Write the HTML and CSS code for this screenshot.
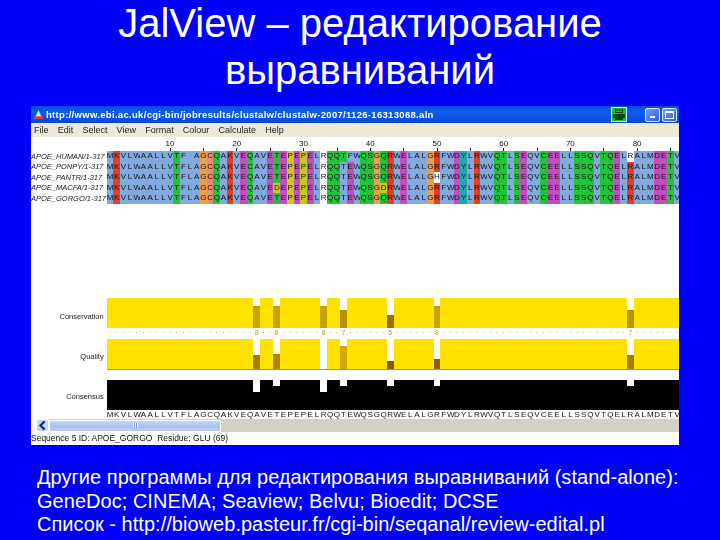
FILE: index.html
```html
<!DOCTYPE html>
<html lang="ru">
<head>
<meta charset="utf-8">
<title>JalView</title>
<link rel="stylesheet" href="styles.css">
</head>
<body>
<h1 class="title">JalView – редактирование<br>выравниваний</h1>
<section class="window">
  <header class="titlebar">
    <svg class="appicon" viewBox="0 0 12 12"><path d="M2 10 L6 1 L10 10 Z" fill="#e8e8f0"/><path d="M1 8h10v3H1z" fill="#d04040"/></svg>
    <span class="url">http://www.ebi.ac.uk/cgi-bin/jobresults/clustalw/clustalw-2007/1126-16313068.aln</span>
    <svg class="printer" viewBox="0 0 16 15"><rect width="16" height="15" fill="#12c02c"/><rect x=".5" y=".5" width="15" height="14" fill="none" stroke="#c8e8f8"/><path d="M4 2h8v4H4zM2 7h12v4H2zM4 11h8v2H4z" fill="#064010"/><path d="M5 3h6M5 4.5h6" stroke="#12c02c"/></svg>
    <span class="winbtn"><span class="minglyph"></span></span>
    <span class="winbtn"><span class="maxglyph"></span></span>
  </header>
  <nav class="menu"><span>File</span><span>Edit</span><span>Select</span><span>View</span><span>Format</span><span>Colour</span><span>Calculate</span><span>Help</span></nav>
  <div class="panel">
    <div class="labels">
      <div class="names">
        <div>APOE_HUMAN/1-317</div>
        <div>APOE_PONPY/1-317</div>
        <div>APOE_PANTR/1-317</div>
        <div>APOE_MACFA/1-317</div>
        <div>APOE_GORGO/1-317</div>
      </div>
      <div class="annlabels">
        <div class="annlabel">Conservation</div>
        <div class="annlabel quality">Quality</div>
        <div class="annlabel consensus">Consensus</div>
      </div>
    </div>
    <div class="tracks">
      <div class="ruler" id="ruler"></div>
      <div id="rows" class="rows"></div>
      <div class="bars cons" id="cons"></div>
      <div class="cells nums" id="nums"></div>
      <div class="bars qual" id="qual"></div>
      <div class="bars black" id="blackbars"></div>
      <div class="cells consseq" id="consseq"></div>
    </div>
  </div>
  <div class="scroll">
    <span class="arrow"><svg viewBox="0 0 8 8"><path d="M5.5 1 L2.5 4 L5.5 7" fill="none" stroke="#1a2a70" stroke-width="1.6"/></svg></span>
    <span class="thumb"><span class="grip"></span></span>
  </div>
  <div class="status">Sequence 5 ID: APOE_GORGO  Residue: GLU (69)</div>
</section>
<div class="notes">
  <p>Другие программы для редактирования выравниваний (stand-alone):</p>
  <p>GeneDoc; CINEMA; Seaview; Belvu; Bioedit; DCSE</p>
  <p>Список - http://bioweb.pasteur.fr/cgi-bin/seqanal/review-edital.pl</p>
</div>
<script src="app.js"></script>
</body>
</html>
```
FILE: styles.css
```css
* { box-sizing: border-box; }
html, body { margin: 0; height: 540px; overflow: hidden; }
body { background: #0000f8; font-family: "Liberation Sans", Arial, sans-serif; color: #fff; }
.title { margin: 0; height: 106px; font-size: 40px; font-weight: 400; line-height: 47px; text-align: center; }
.window { width: 648px; height: 339px; margin-left: 31px; background: #fff; color: #111; display: flex; flex-direction: column; overflow: hidden; filter: blur(.35px); }
.titlebar { height: 17px; background: linear-gradient(#0a4ad8, #0c5cf0 30%, #0850e0 80%, #0a44c8); display: flex; align-items: center; padding-left: 2px; padding-right: 2px; color: #fff; }
.appicon { width: 11px; height: 11px; margin-right: 2px; }
.url { font-size: 9.5px; font-weight: 700; letter-spacing: .31px; white-space: nowrap; flex: 1; }
.printer { width: 16px; height: 15px; margin-right: 16px; }
.winbtn { width: 15px; height: 14px; margin-left: 2px; border-radius: 2px; background: linear-gradient(135deg, #6f9cf0, #2f62d8); border: 1px solid #dce8fc; display: flex; align-items: center; justify-content: center; }
.minglyph { width: 5px; height: 2px; background: #fff; margin-top: 5px; }
.maxglyph { width: 9px; height: 8px; border: 1px solid #fff; border-top-width: 2px; }
.menu { height: 14px; background: #ece9d8; display: flex; gap: 9.2px; padding-left: 3px; align-items: center; font-size: 9px; color: #222; }
.panel { height: 282px; display: flex; }
.labels { width: 75.7px; font-size: 7.5px; color: #222; flex: none; }
.names { padding-top: 14.5px; font-style: italic; }
.names div { height: 10.5px; line-height: 10.5px; white-space: nowrap; }
.annlabels { display: flex; flex-direction: column; align-items: flex-end; padding-right: 3px; margin-top: 108px; gap: 30px; }
.annlabel { height: 10px; line-height: 10px; }
.tracks { flex: 1; min-width: 0; overflow: hidden; }
.ruler { height: 14px; display: flex; position: relative; }
.rulecell { width: 6.68px; flex: none; position: relative; font-size: 8px; color: #111; }
.rulecell b { position: absolute; left: -6px; width: 18.68px; text-align: center; top: 2px; font-weight: 400; line-height: 9px; }
.rulecell i { position: absolute; left: 3px; top: 11px; width: 1px; height: 3px; background: #222; }
.rows { height: 52.5px; }
.row, .cells, .bars { display: flex; }
.row { height: 10.5px; }
.cell { width: 6.68px; flex: none; height: 100%; text-align: center; font-size: 8px; line-height: 10.5px; color: #111; }
.c-b { background: #82aade; }
.c-r { background: #e04028; }
.c-m { background: #c050c0; }
.c-g { background: #22c23a; }
.c-o { background: #eaa050; }
.c-p { background: #e88a78; }
.c-y { background: #c8c820; }
.c-c { background: #20a8b0; }
.c-w { background: #fff; }
.bars { height: 30px; }
.cons { margin-top: 94.5px; }
.qual { border-bottom: 1px solid #b09a28; height: 31px; }
.black { margin-top: 9.5px; }
.barcell { width: 6.68px; flex: none; height: 100%; display: flex; flex-direction: column; justify-content: flex-end; }
.cons .barcell, .qual .barcell { background: #ffe200; }
.black .barcell { background: #000; justify-content: flex-start; }
.barcell.gap { background: #fff; }
.black .barcell.gap { background: #000; }
.black .barcell.gap span { background: #fff; }
.nums { height: 11px; }
.nums .cell { line-height: 10px; font-size: 7px; color: #b09a40; }
.consseq { height: 10px; }
.consseq .cell { line-height: 10px; }
.scroll { height: 13px; display: flex; align-items: center; background: #d4d0c8; padding: 0; }
.arrow { width: 18px; height: 13px; padding-left: 6px; background: #fff; display: flex; align-items: center; flex: none; }
.arrow svg { width: 11px; height: 11px; background: #c4d4f4; border-radius: 2px; }
.thumb { width: 172px; height: 12px; background: linear-gradient(#c6d6f6, #a8c0ec 60%, #c0d0f0); border: 1px solid #fff; display: flex; align-items: center; justify-content: center; }
.grip { width: 5px; height: 5px; background: repeating-linear-gradient(90deg, #eef2fc 0 1px, #7a96d0 1px 2px); }
.status { height: 13px; line-height: 13px; font-size: 8.5px; color: #111; white-space: pre; }
.notes { padding: 21px 0 0 37px; font-size: 20px; letter-spacing: .03px; line-height: 23.5px; white-space: nowrap; }
.notes p { margin: 0; }
```
FILE: app.js
```js
var seq = "MKVLWAALLVTFLAGCQAKVEQAVETEPEPELRQQTEWQSGQRWELALGRFWDYLRWVQTLSEQVCEELLSSQVTQELRALMDETV";
var rowsData = [
  { chars: { 36: "T", 37: "F", 79: "R", 13: " " }, colors: { 36: "g", 37: "b", 79: "w" } },
  { chars: { 22: "C", 29: "E", 13: "L" }, colors: {} },
  { chars: { 50: "H" }, colors: { 50: "w" } },
  { chars: { 26: "D", 42: "D" }, colors: { 26: "y", 42: "y" } },
  { chars: {}, colors: {} }
];
var map = {
  A: "b", V: "b", L: "b", I: "b", M: "b", F: "b", W: "b",
  K: "r", R: "r", E: "m", D: "m", T: "g", S: "g", Q: "g", N: "g",
  G: "o", C: "p", P: "y", Y: "c", H: "c"
};
var colorAt = { 33: "w", 36: "b", 37: "m", 66: "g", 64: "b" };
function cell(ch, color) {
  var c = document.createElement("span");
  c.className = "cell" + (color ? " c-" + color : "");
  c.textContent = ch;
  return c;
}
var rows = document.getElementById("rows");
rowsData.forEach(function (r) {
  var row = document.createElement("div");
  row.className = "row";
  for (var n = 1; n <= 86; n++) {
    var ch = r.chars[n] || seq[n - 1];
    var col = r.colors[n] || colorAt[n] || map[seq[n - 1]];
    row.appendChild(cell(ch, col));
  }
  rows.appendChild(row);
});
var ruler = document.getElementById("ruler");
for (var n = 1; n <= 86; n++) {
  var rc = document.createElement("span");
  rc.className = "rulecell";
  if (n % 5 === 0 && n >= 10) {
    rc.innerHTML = (n % 10 === 0 ? "<b>" + n + "</b>" : "") + "<i></i>";
  }
  ruler.appendChild(rc);
}
var cons = { 23: [22, "#c9a300", 8], 26: [22, "#c9a300", 8], 33: [22, "#c9a300", 8], 36: [18, "#b89000", 7], 43: [13, "#9e6f00", 5], 50: [22, "#c9a300", 8], 79: [18, "#bf9400", 7] };
var qual = { 23: [14, "#a87c00"], 26: [15, "#b08400"], 33: [0, "#fff"], 36: [23, "#d0a800"], 43: [8, "#8a5a00"], 50: [10, "#8f5f00"], 79: [14, "#a87c00"] };
var blk = { 23: 12, 26: 6, 33: 12, 36: 6, 43: 6, 50: 6, 79: 6 };
function bar(parent, gap, h, color) {
  var b = document.createElement("span");
  b.className = "barcell" + (gap ? " gap" : "");
  if (gap) {
    var s = document.createElement("span");
    s.style.height = h + "px";
    s.style.background = color;
    b.appendChild(s);
  }
  parent.appendChild(b);
}
var consEl = document.getElementById("cons");
var qualEl = document.getElementById("qual");
var blackEl = document.getElementById("blackbars");
var numsEl = document.getElementById("nums");
var consSeq = document.getElementById("consseq");
for (n = 1; n <= 86; n++) {
  bar(consEl, cons[n], cons[n] && cons[n][0], cons[n] && cons[n][1]);
  bar(qualEl, qual[n], qual[n] && qual[n][0], qual[n] && qual[n][1]);
  bar(blackEl, blk[n], blk[n], "#fff");
  numsEl.appendChild(cell(cons[n] ? String(cons[n][2]) : "·"));
  consSeq.appendChild(cell(seq[n - 1]));
}
```
